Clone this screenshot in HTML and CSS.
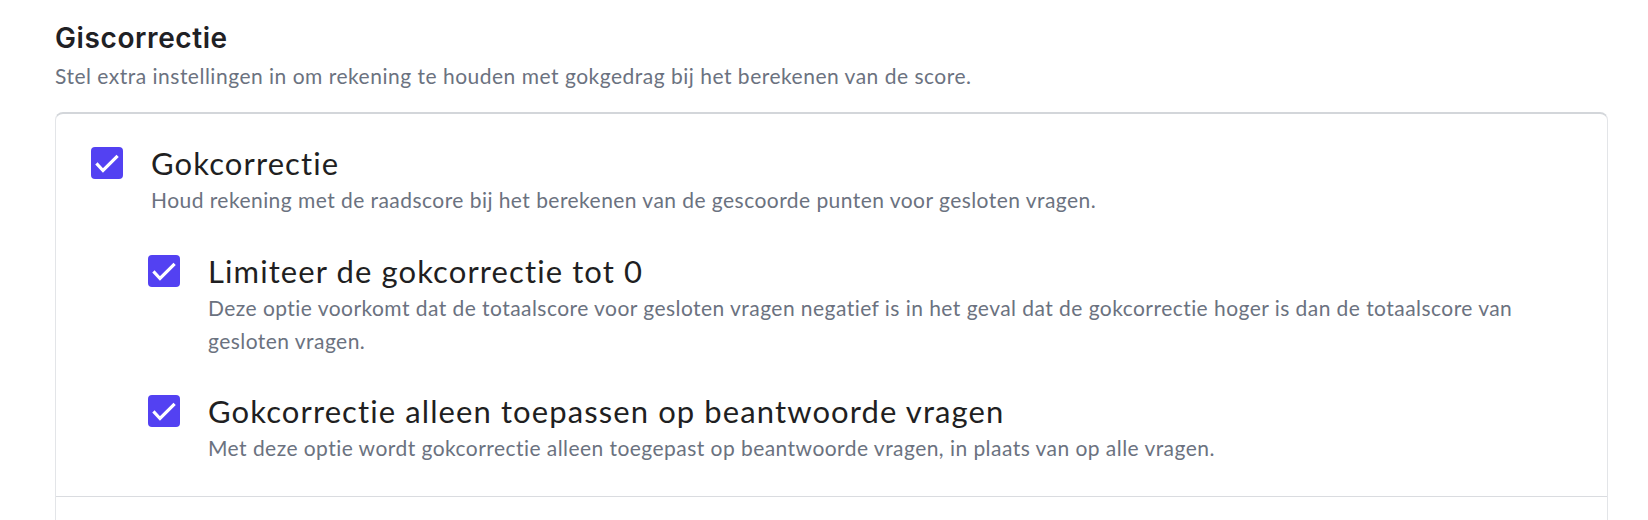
FILE: index.html
```html
<!DOCTYPE html>
<html lang="nl">
<head>
<meta charset="utf-8">
<title>Giscorrectie</title>
<link rel="stylesheet" href="styles.css">
</head>
<body>
<main class="page">
  <h1 class="title">Giscorrectie</h1>
  <p class="subtitle">Stel extra instellingen in om rekening te houden met gokgedrag bij het berekenen van de score.</p>
  <section class="card">
    <div class="card-section">
      <div class="option">
        <span class="checkbox"><svg viewBox="0 0 32 32" width="32" height="32"><path d="M6.5 17.5 L12 23.5 L25.5 10" fill="none" stroke="#fff" stroke-width="3.2" stroke-linecap="square" stroke-linejoin="miter"/></svg></span>
        <div class="option-body">
          <div class="label">Gokcorrectie</div>
          <p class="desc">Houd rekening met de raadscore bij het berekenen van de gescoorde punten voor gesloten vragen.</p>
          <div class="suboptions">
            <div class="option">
              <span class="checkbox"><svg viewBox="0 0 32 32" width="32" height="32"><path d="M6.5 17.5 L12 23.5 L25.5 10" fill="none" stroke="#fff" stroke-width="3.2" stroke-linecap="square" stroke-linejoin="miter"/></svg></span>
              <div class="option-body">
                <div class="label">Limiteer de gokcorrectie tot 0</div>
                <p class="desc">Deze optie voorkomt dat de totaalscore voor gesloten vragen negatief is in het geval dat de gokcorrectie hoger is dan de totaalscore van gesloten vragen.</p>
              </div>
            </div>
            <div class="option">
              <span class="checkbox"><svg viewBox="0 0 32 32" width="32" height="32"><path d="M6.5 17.5 L12 23.5 L25.5 10" fill="none" stroke="#fff" stroke-width="3.2" stroke-linecap="square" stroke-linejoin="miter"/></svg></span>
              <div class="option-body">
                <div class="label">Gokcorrectie alleen toepassen op beantwoorde vragen</div>
                <p class="desc">Met deze optie wordt gokcorrectie alleen toegepast op beantwoorde vragen, in plaats van op alle vragen.</p>
              </div>
            </div>
          </div>
        </div>
      </div>
    </div>
    <div class="card-section card-section-next"></div>
  </section>
</main>
</body>
</html>
```

FILE: styles.css
```css
html, body {
  margin: 0;
  padding: 0;
  background: #ffffff;
}

.page {
  padding: 22px 40px 0 55px;
  font-family: Lato, "Noto Sans", sans-serif;
}

.title {
  margin: 0;
  font-family: Inter, "Noto Sans", sans-serif;
  font-weight: 600;
  font-size: 28px;
  line-height: 33.6px;
  color: #1f2125;
  letter-spacing: 0.6px;
}

.subtitle {
  margin: 6px 0 0 0;
  font-size: 21px;
  line-height: 28px;
  letter-spacing: 0.5px;
  color: #6b7280;
}

.card {
  margin-top: 22px;
  border: 1px solid #e3e5e8;
  border-top: 2px solid #d3d6da;
  border-radius: 8px;
  border-bottom: none;
  border-bottom-left-radius: 0;
  border-bottom-right-radius: 0;
}

.card-section {
  padding: 33px 35px 32px 35px;
}

.card-section-next {
  border-top: 1px solid #dadce0;
  height: 24px;
  padding: 0;
}

.option {
  display: flex;
  align-items: flex-start;
  gap: 28px;
}

.checkbox {
  flex: 0 0 32px;
  width: 32px;
  height: 32px;
  border-radius: 4px;
  background: #5341f2;
  display: flex;
}

.checkbox svg {
  display: block;
}

.option-body {
  display: flex;
  flex-direction: column;
}

.label {
  font-size: 31px;
  line-height: 32px;
  letter-spacing: 1.1px;
  color: #1f1f22;
}

.desc {
  margin: 4px 0 0 0;
  font-size: 21px;
  line-height: 33px;
  letter-spacing: 0.45px;
  color: #6b7280;
}

.suboptions {
  margin: 39px 0 0 -3px;
  display: flex;
  flex-direction: column;
  gap: 38px;
}
```
